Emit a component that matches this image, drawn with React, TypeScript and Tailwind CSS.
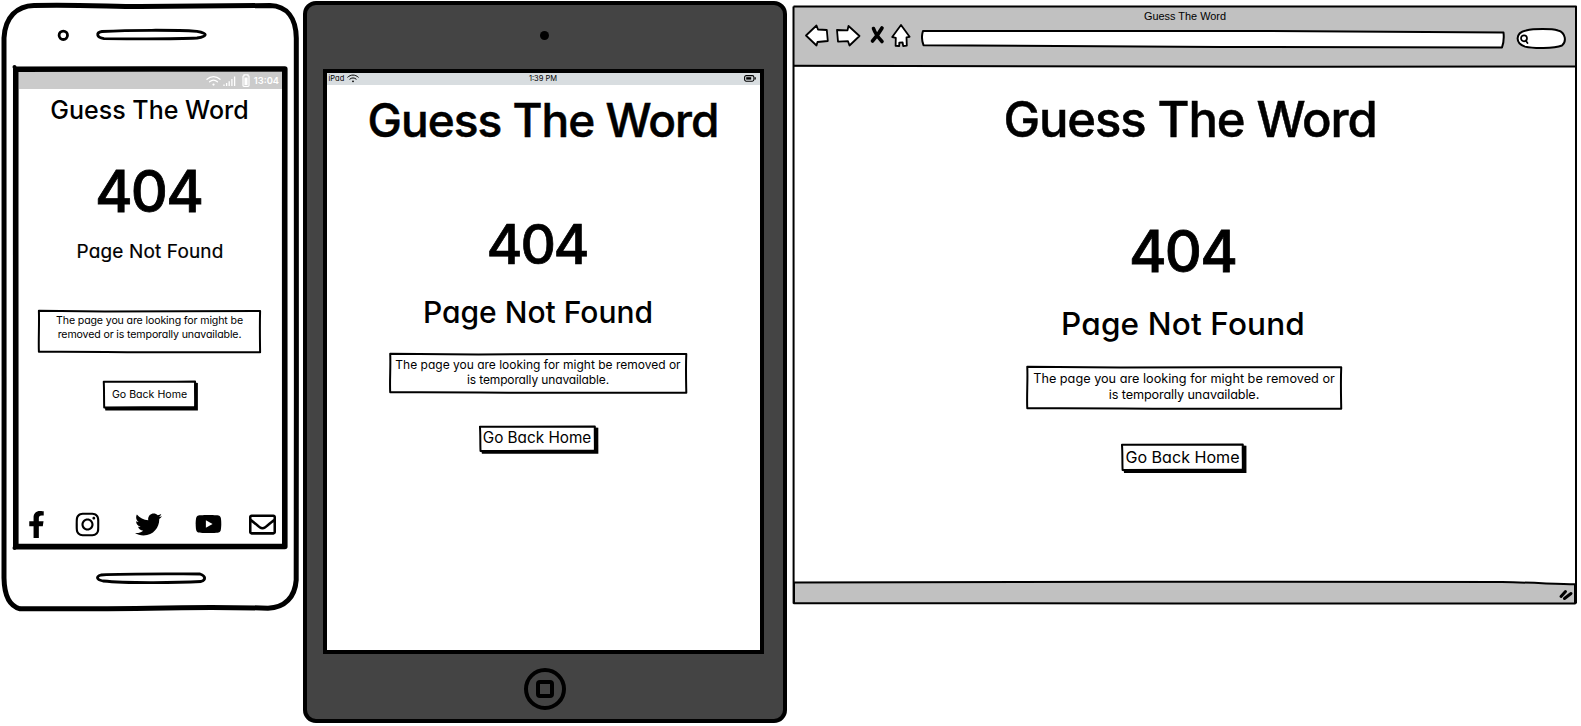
import type { ReactNode } from "react";
import { FaFacebookF, FaInstagram, FaTwitter, FaYoutube, FaRegEnvelope } from "react-icons/fa";

const MESSAGE_PHONE = ["The page you are looking for might be", "removed or is temporally unavailable."];
const MESSAGE_WIDE = ["The page you are looking for might be removed or", "is temporally unavailable."];

function MessageBox({ lines, className }: { lines: string[]; className: string }) {
  return (
    <div className={`relative text-center whitespace-nowrap ${className}`}>
      <svg
        className="absolute inset-0 h-full w-full overflow-visible"
        viewBox="0 0 100 100"
        preserveAspectRatio="none"
        fill="none"
        stroke="black"
        strokeWidth="2"
        strokeLinejoin="round"
      >
        <path
          vectorEffect="non-scaling-stroke"
          d="M0.4 2 C12 2.2 20 3 30 3.4 C50 2.6 80 2.4 99.6 2.6 C99.4 35 99.5 60 99.6 98 C80 98.2 60 98.6 40 98 C25 96.6 10 97 0.4 97 C0.2 70 0.6 30 0.4 2 Z"
        />
      </svg>
      {lines.map((line) => (
        <p key={line} className="last:tracking-[-0.13px]">{line}</p>
      ))}
    </div>
  );
}

function SketchButton({ children, className }: { children: ReactNode; className: string }) {
  return (
    <button className={`relative flex items-center justify-center whitespace-nowrap ${className}`}>
      <svg
        className="absolute inset-0 h-full w-full overflow-visible"
        viewBox="0 0 100 100"
        preserveAspectRatio="none"
        strokeLinejoin="round"
      >
        <path d="M2 97 L2.5 109 L102 109 L102 7 L97 5 Z" fill="black" />
        <path
          vectorEffect="non-scaling-stroke"
          fill="white"
          stroke="black"
          strokeWidth="2"
          d="M0.8 3 C30 2 60 3.5 99 2 C98.8 30 99.2 70 99 97 C70 98 30 96.5 1.3 98 C1 70 1.3 30 0.8 3 Z"
        />
      </svg>
      <span className="relative">{children}</span>
    </button>
  );
}

function Wifi({ className }: { className: string }) {
  return (
    <svg className={className} viewBox="0 0 16 12" fill="none" stroke="currentColor" strokeLinecap="round">
      <path strokeWidth="1.3" d="M1 4.2 C5 0.4 11 0.4 15 4.2 M3.8 6.8 C6.3 4.6 9.7 4.6 12.2 6.8" />
      <circle cx="8" cy="9.8" r="1.2" fill="currentColor" stroke="none" />
    </svg>
  );
}

function Phone() {
  return (
    <section className="relative h-[612px] w-[300px] shrink-0 pl-[19px] pt-[72px]">
      <svg className="absolute inset-0" width="300" height="612" viewBox="0 0 300 612" fill="none" stroke="black" strokeLinejoin="round">
        <path
          strokeWidth="5"
          d="M34 5.5 C70 4.5 100 6 140 6.6 C190 6 230 5.5 270 5.5 C287 6 296 18 296.3 38 C295.8 200 296.8 400 296.2 580 C295 597 285 607.8 268 608.2 C240 607.4 200 607 150 608.2 C110 609 60 608.5 20 608.8 C9 606 4.3 594 4 578 C4.4 400 3.6 200 4 38 C5 17 17 6 34 5.5 Z"
        />
        <circle cx="63.3" cy="35.3" r="4.2" strokeWidth="2.8" />
        <path strokeWidth="2.8" d="M102 31.5 C130 30 175 29.8 197 31.3 C208 33 208 36.5 197 38 C175 39.2 125 38.8 104 38.6 C96 37.5 96 32.5 102 31.5 Z" />
        <path strokeWidth="2.8" d="M101 575 C130 573.4 175 574 200 574 C206 576 206 580 201 581.5 C175 583 125 583.2 103 581 C96 579.5 96 576.5 101 575 Z" />
        <path strokeWidth="5.6" d="M15.8 69.3 C100 68.7 200 69.3 284.8 69 C284.4 230 285.2 400 284.8 546.5 C200 547 100 546.2 15.8 546.6 C16.2 400 15.4 230 15.8 69.3 Z" />
        <circle cx="14.5" cy="67" r="2" fill="black" stroke="none" />
        <circle cx="14.5" cy="548" r="2" fill="black" stroke="none" />
      </svg>
      <div className="relative flex h-[472px] w-[263px] flex-col items-center">
        <div className="flex h-[17px] w-full items-center justify-end bg-[#cbcbcb] pr-[3px] text-white">
          <Wifi className="h-[12px] w-[15px]" />
          <svg className="ml-[2px] h-[12px] w-[13px]" viewBox="0 0 13 12" stroke="currentColor" strokeWidth="1.3" fill="none">
            <path d="M1 11V9.5 M3.6 11V8 M6.2 11V6.2 M8.9 11V4 M11.6 11V1.5" />
          </svg>
          <svg className="ml-[6px] h-[13px] w-[8px]" viewBox="0 0 8 13" fill="none" stroke="currentColor" strokeWidth="1.2">
            <path d="M1 2.5Q1 1.8 2 1.8V0.8H6V1.8Q7 1.8 7 2.5V11.5Q7 12.3 6 12.3H2Q1 12.3 1 11.5Z" />
            <path d="M3 4H5V10.4H3Z" fill="currentColor" />
          </svg>
          <span className="ml-[4px] text-[9.3px] leading-none font-semibold">13:04</span>
        </div>
        <h1 className="mt-[9px] mr-[2px] text-[25px] leading-[25px] font-medium">Guess The Word</h1>
        <p className="mt-[39px] mr-[4px] text-[57.5px] leading-[58px] font-medium tracking-[-1.8px] [-webkit-text-stroke:0.8px_black]">404</p>
        <p className="mt-[22px] mr-[1px] text-[19px] leading-[20px] tracking-[0.15px] [-webkit-text-stroke:0.2px_black]">Page Not Found</p>
        <MessageBox lines={MESSAGE_PHONE} className="mt-[48px] mr-[2px] h-[43px] w-[223px] pt-[4px] text-[10.6px] leading-[14px] tracking-[-0.13px]" />
        <SketchButton className="mt-[28px] mr-[2px] h-[27px] w-[93px] text-[10.6px]">Go Back Home</SketchButton>
        <nav className="mt-auto mb-[6px] flex h-[28px] w-full items-center pl-[7px]">
          <FaFacebookF className="h-[27px] w-[21px]" />
          <FaInstagram className="ml-[27px] h-[27px] w-[27px]" />
          <FaTwitter className="ml-[34px] h-[27px] w-[27px]" />
          <FaYoutube className="ml-[33px] h-[26px] w-[27px]" />
          <FaRegEnvelope className="ml-[27px] h-[27px] w-[27px]" />
        </nav>
      </div>
    </section>
  );
}

function Tablet() {
  return (
    <section className="ml-[2.5px] mt-px flex h-[722px] w-[484px] shrink-0 flex-col items-center rounded-[13px] border-4 border-black bg-[#444444]">
      <span className="mt-[26px] size-[9px] rounded-full bg-black" />
      <div className="mt-[28.5px] mr-[3px] flex h-[585px] w-[441px] flex-col items-center border-4 border-black bg-white">
        <div className="grid h-[12px] w-full grid-cols-3 items-center bg-[#d8dde0] px-[2px] text-[7.5px] leading-none">
          <span className="flex items-center gap-[3px]">
            iPad
            <Wifi className="h-[9px] w-[12px]" />
          </span>
          <span className="text-center">1:39 PM</span>
          <svg className="mr-[2px] ml-auto h-[7px] w-[12px]" viewBox="0 0 12 7" fill="none" stroke="black">
            <rect x="0.6" y="0.6" width="9.3" height="5.6" rx="1.6" strokeWidth="1.1" />
            <rect x="2.2" y="2.2" width="5" height="2.4" fill="black" stroke="none" />
            <path d="M11.2 2.3V4.6" strokeWidth="1.2" />
          </svg>
        </div>
        <h1 className="mt-[12px] text-[46px] leading-[46px] font-medium tracking-[-1px] [-webkit-text-stroke:0.5px_black]">Guess The Word</h1>
        <p className="mt-[73px] mr-[12px] text-[55px] leading-[56px] font-medium tracking-[-2.3px] [-webkit-text-stroke:0.7px_black]">404</p>
        <p className="mt-[25px] mr-[10px] text-[30px] leading-[30px] font-medium">Page Not Found</p>
        <MessageBox lines={MESSAGE_WIDE} className="mt-[26px] mr-[10px] h-[40.5px] w-[298.5px] pt-[4px] text-[12px] leading-[15px]" />
        <SketchButton className="mt-[33px] mr-[12px] h-[25.5px] w-[117px] text-[15.3px]">Go Back Home</SketchButton>
      </div>
      <span className="mt-[14px] flex size-[42px] items-center justify-center rounded-full border-4 border-black">
        <span className="size-[18px] rounded-[4px] border-4 border-black" />
      </span>
    </section>
  );
}

function Browser() {
  return (
    <section className="relative ml-[5.5px] mt-[5px] flex h-[600px] w-[786px] shrink-0 flex-col">
      <header className="mt-px ml-px flex h-[61px] w-[784px] flex-col bg-[#c1c1c1]">
        <span className="mt-[3px] text-center font-['Liberation_Sans',sans-serif] text-[10.9px] leading-[14px]">Guess The Word</span>
        <div className="mt-px flex h-[24px] items-start pl-[12px]">
          <svg className="shrink-0" width="80" height="24" viewBox="0 0 80 24" fill="white" stroke="black" strokeWidth="1.8" strokeLinejoin="round" strokeLinecap="round">
            <path d="M1 11.5 L11.5 1.5 L13 5.5 L21.8 6 L22.8 17 L12.5 18 L11.5 21.5 Z" />
            <path d="M32 6 L42.5 6.3 L43.5 2 L54.5 12 L44.5 21.5 L43 17.2 L33 17.6 Z" />
            <path d="M68.5 4.5 Q70.5 10.5 77 17.5 M77 4 Q73 11 67.5 17" fill="none" strokeWidth="3.6" />
          </svg>
          <svg className="ml-[6px] shrink-0" width="20" height="24" viewBox="0 0 20 24" fill="white" stroke="black" strokeWidth="1.8" strokeLinejoin="round">
            <path d="M10 1 L18.6 12.8 L15.5 13.4 L15.8 21.6 L12.2 22 L11.6 18.5 L8.3 18.6 L8.2 22 L4.6 21.8 L4.8 13.8 L1.2 13 Z" />
          </svg>
          <svg className="mt-[6px] ml-[10px] shrink-0" width="584" height="20" viewBox="0 0 584 20" fill="white" stroke="black" strokeWidth="2" strokeLinejoin="round">
            <path d="M2 1 C100 1.6 250 0.4 350 1 C450 1.6 520 2.2 582.5 2.5 C583 7 583 12 581 17.5 C480 17.4 380 17.6 300 17 C200 16.4 100 15.5 2.5 15.2 C0.6 10 0.6 5 2 1 Z" />
          </svg>
          <svg className="mt-[4px] ml-[11px] shrink-0" width="51" height="22" viewBox="0 0 51 22" fill="white" stroke="black" strokeWidth="2" strokeLinecap="round">
            <path d="M10 2.5 C18 0.6 36 0.6 42 2.5 C50 4.5 50.5 14 46 17.5 C38 20.8 17 20.6 9 18.6 C-1 15.5 -1 4.8 10 2.5 Z" />
            <circle cx="8" cy="10.3" r="3" strokeWidth="1.7" />
            <path d="M9.8 12.8 L11.5 15" strokeWidth="1.8" />
          </svg>
        </div>
      </header>
      <main className="flex flex-1 flex-col items-center">
        <h1 className="mt-[28px] ml-[10px] text-[49px] leading-[49px] font-medium tracking-[-1.1px] [-webkit-text-stroke:0.5px_black]">Guess The Word</h1>
        <p className="mt-[78px] mr-[5px] text-[57.5px] leading-[58px] font-medium tracking-[-1.8px] [-webkit-text-stroke:0.8px_black]">404</p>
        <p className="mt-[27.5px] mr-[4px] text-[31.5px] leading-[32px] font-medium tracking-[0.15px]">Page Not Found</p>
        <MessageBox lines={MESSAGE_WIDE} className="mt-[26px] mr-[2px] h-[43.5px] w-[316.5px] pt-[5px] text-[12.7px] leading-[16px]" />
        <SketchButton className="mt-[34.5px] mr-[5px] h-[26.5px] w-[123px] text-[16.1px]">Go Back Home</SketchButton>
      </main>
      <svg className="absolute inset-0" width="786" height="600" viewBox="0 0 786 600" fill="none" stroke="black" strokeWidth="2" strokeLinejoin="round">
        <path fill="#c1c1c1" d="M2 577.4 C80 577.6 200 576.4 350 576.8 C500 576.2 650 576.4 710 577 C740 577.6 765 579 783 579.3 L783 598.6 C600 598 200 599 2 598.2 Z" />
        <path d="M1.5 1.6 C200 1 600 2 784 1.6 C784.4 200 783.6 400 784 598.4 M1.5 1.6 C2 200 1.2 400 1.6 598.4" />
        <path d="M1.5 60.8 C100 62.4 500 62 783.5 61.4" />
        <path d="M769 591.5 L773.5 586.5 M772.5 593.5 L779 588.5" strokeWidth="3" strokeLinecap="round" />
      </svg>
    </section>
  );
}

export default function App() {
  return (
    <div className="flex h-[726px] w-[1581px] items-start overflow-hidden bg-white font-['Inter',sans-serif] text-black [font-feature-settings:'cv11']">
      <Phone />
      <Tablet />
      <Browser />
    </div>
  );
}
